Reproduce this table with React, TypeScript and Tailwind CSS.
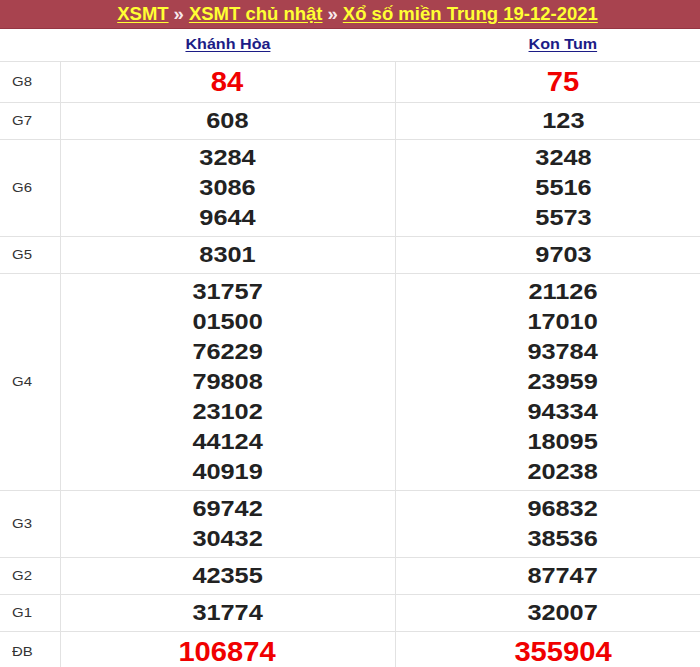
import React from "react";

type Row = { label: string; a: string[]; b: string[]; big?: boolean };

const rows: Row[] = [
  { label: "G8", a: ["84"], b: ["75"], big: true },
  { label: "G7", a: ["608"], b: ["123"] },
  { label: "G6", a: ["3284", "3086", "9644"], b: ["3248", "5516", "5573"] },
  { label: "G5", a: ["8301"], b: ["9703"] },
  {
    label: "G4",
    a: ["31757", "01500", "76229", "79808", "23102", "44124", "40919"],
    b: ["21126", "17010", "93784", "23959", "94334", "18095", "20238"],
  },
  { label: "G3", a: ["69742", "30432"], b: ["96832", "38536"] },
  { label: "G2", a: ["42355"], b: ["87747"] },
  { label: "G1", a: ["31774"], b: ["32007"] },
  { label: "ĐB", a: ["106874"], b: ["355904"], big: true },
];

function Cell({ nums, big }: { nums: string[]; big?: boolean }) {
  return (
    <td className="border border-[#e2e2e2] text-center align-middle py-[3px]">
      {nums.map((n) => (
        <div
          key={n}
          className={
            big
              ? "text-[27px] leading-[34px] font-bold text-[#f00000]"
              : "text-[22px] leading-[30px] font-bold text-[#222]"
          }
        >
          <span className={big ? "inline-block scale-x-[1.08]" : "inline-block scale-x-[1.15]"}>{n}</span>
        </div>
      ))}
    </td>
  );
}

export default function App() {
  return (
    <div className="w-[700px] h-[667px] overflow-hidden bg-white" style={{ fontFamily: '"Liberation Sans", Arial, sans-serif' }}>
      <div className="w-[731px]">
        <div
          className="h-[29px] bg-[#a8434f] border-b border-[#953543] flex items-center justify-center pr-[16px] text-[18.5px] font-bold text-[#f7e8ec]"
          style={{ fontFamily: '"Liberation Sans Narrow", "Liberation Sans", Arial, sans-serif' }}
        >
          <span className="text-[#ffff33] underline underline-offset-2">XSMT</span>
          <span className="mx-[5px]">»</span>
          <span className="text-[#ffff33] underline underline-offset-2">XSMT chủ nhật</span>
          <span className="mx-[5px]">»</span>
          <span className="text-[#ffff33] underline underline-offset-2">Xổ số miền Trung 19-12-2021</span>
        </div>
        <table className="w-[731px] border-collapse table-fixed">
          <colgroup>
            <col className="w-[60px]" />
            <col className="w-[335px]" />
            <col className="w-[336px]" />
          </colgroup>
          <tbody>
            <tr className="h-[32px]">
              <td className="border-b border-[#e2e2e2]"></td>
              <td className="border-b border-[#e2e2e2] text-center text-[14px] font-bold text-[#1c1c86]">
                <span className="inline-block scale-x-[1.15] underline underline-offset-2">Khánh Hòa</span>
              </td>
              <td className="border-b border-[#e2e2e2] text-center text-[14px] font-bold text-[#1c1c86]">
                <span className="inline-block scale-x-[1.15] underline underline-offset-2">Kon Tum</span>
              </td>
            </tr>
            {rows.map((r) => (
              <tr key={r.label}>
                <td className="border border-l-0 border-[#e2e2e2] pl-[12px] text-[13px] text-[#333] align-middle">
                  <span className="inline-block origin-left scale-x-[1.15]">{r.label}</span>
                </td>
                <Cell nums={r.a} big={r.big} />
                <Cell nums={r.b} big={r.big} />
              </tr>
            ))}
          </tbody>
        </table>
      </div>
    </div>
  );
}
